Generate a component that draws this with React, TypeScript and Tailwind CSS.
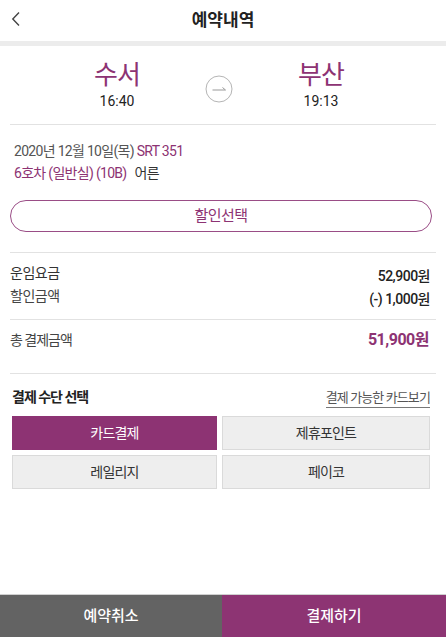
import React from 'react';

const font = { fontFamily: 'Roboto, "Noto Sans CJK KR", sans-serif' };

function Divider() {
  return <div className="mx-[10px] h-px bg-[#e2e2e2]" />;
}

function PayButton({ label, active }: { label: string; active?: boolean }) {
  return (
    <button
      className={`h-[34px] text-[14px] tracking-[-0.8px] ${
        active ? 'bg-[#8d3373] text-white' : 'bg-[#eeeeee] text-[#333] border border-[#dadada]'
      }`}
    >
      {label}
    </button>
  );
}

export default function App() {
  return (
    <div className="w-[446px] h-[637px] bg-white flex flex-col text-[#333]" style={font}>
      {/* header */}
      <div className="relative h-[41px] flex items-center justify-center">
        <svg className="absolute left-[11px] top-[11px]" width="10" height="16" viewBox="0 0 10 16">
          <path d="M8 1.5 L1.8 8 L8 14.5" fill="none" stroke="#444" strokeWidth="1.4" />
        </svg>
        <h1 className="text-[17px] font-bold text-[#222]">예약내역</h1>
      </div>
      <div className="h-[5px] bg-[#ececec]" />

      {/* route */}
      <div className="h-[78px] flex items-start justify-center pt-[13px] pr-[8px]">
        <div className="w-[90px] flex flex-col items-center">
          <span className="text-[26px] leading-[32px] text-[#8d3373] tracking-[-1px]">수서</span>
          <span className="text-[14px] leading-[20px] text-[#222]">16:40</span>
        </div>
        <div className="w-[114px] flex justify-center pt-[16px]">
          <svg width="28" height="28" viewBox="0 0 28 28">
            <circle cx="14" cy="14" r="13" fill="none" stroke="#b5b5b5" strokeWidth="1" />
            <path d="M7.5 15 H20.5 L17.5 12.5" fill="none" stroke="#999" strokeWidth="1" />
          </svg>
        </div>
        <div className="w-[90px] flex flex-col items-center">
          <span className="text-[26px] leading-[32px] text-[#8d3373] tracking-[-1px]">부산</span>
          <span className="text-[14px] leading-[20px] text-[#222]">19:13</span>
        </div>
      </div>
      <Divider />

      {/* train info */}
      <div className="px-[14px] pt-[15px] text-[14px] leading-[22px] tracking-[-0.7px]">
        <p className="text-[#555]">
          2020년 12월 10일(목) <span className="text-[#8d3373]">SRT 351</span>
        </p>
        <p>
          <span className="text-[#8d3373]">6호차 (일반실) (10B)</span>
          <span className="ml-[8px] text-[#333]">어른</span>
        </p>
      </div>
      <div className="px-[10px] pt-[16px] pb-[20px]">
        <button className="w-[422px] h-[32px] rounded-full border border-[#9a4d86] text-[#8d3373] text-[15px] tracking-[-0.5px]">
          할인선택
        </button>
      </div>
      <Divider />

      {/* fares */}
      <div className="pl-[10px] pr-[16px] pt-[9px] pb-[12px] text-[14px] tracking-[-0.5px]">
        <div className="flex justify-between items-end leading-[22px]">
          <span className="text-[#333]">운임요금</span>
          <span className="font-medium text-[#222] relative top-[3px]">52,900원</span>
        </div>
        <div className="flex justify-between items-end leading-[22px] mt-[1px]">
          <span className="text-[#444]">할인금액</span>
          <span className="font-medium text-[#222] relative top-[3px]">(-) 1,000원</span>
        </div>
      </div>
      <Divider />
      <div className="pl-[10px] pr-[17px] pt-[9px] pb-[22px] flex justify-between items-center text-[14px] leading-[22px] tracking-[-0.5px]">
        <span className="text-[#444] tracking-[-1px]">총 결제금액</span>
        <span className="text-[16px] font-bold text-[#8d3373]">51,900원</span>
      </div>
      <Divider />

      {/* payment */}
      <div className="px-[12px] pt-[13px]">
        <div className="flex justify-between items-center">
          <span className="text-[14px] font-bold text-[#222] tracking-[-1px]">결제 수단 선택</span>
          <span className="text-[13px] text-[#555] border-b border-[#777] leading-[19px] mr-[4px] tracking-[-0.9px]">
            결제 가능한 카드보기
          </span>
        </div>
        <div className="grid grid-cols-[205px_208px] gap-[5px] mt-[8px]">
          <PayButton label="카드결제" active />
          <PayButton label="제휴포인트" />
          <PayButton label="레일리지" />
          <PayButton label="페이코" />
        </div>
      </div>

      <div className="flex-1" />
      <div className="h-[43px] flex border-t border-[#d0d0d0] text-white text-[15px] font-medium">
        <button className="w-[222px] bg-[#636363]">예약취소</button>
        <button className="flex-1 bg-[#8d3473]">결제하기</button>
      </div>
    </div>
  );
}
